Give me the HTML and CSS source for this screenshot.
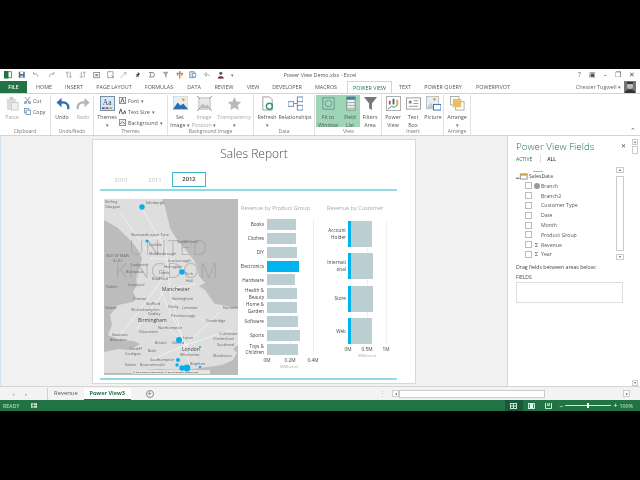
FILE: index.html
```html
<!DOCTYPE html>
<html lang="en">
<head>
<meta charset="utf-8">
<title>Power View Demo.xlsx - Excel</title>
<link rel="stylesheet" href="styles.css">
</head>
<body>
<div class="letterbox"></div>
<div class="window">
  <header class="titlebar">
    <div class="qat">
      <svg class="qi" viewBox="0 0 10 10"><rect x="3" y="1" width="7" height="8" fill="#fff" stroke="#217346"/><rect x="0" y="0" width="6" height="10" fill="#217346"/></svg>
      <svg class="qi" viewBox="0 0 10 10"><rect x="1" y="1" width="8" height="8" fill="#4a6a8c"/><rect x="3" y="1" width="4" height="3" fill="#fff"/><rect x="3" y="6" width="4" height="3" fill="#ccd"/></svg>
      <svg class="qi" viewBox="0 0 10 10"><path d="M8 8C8 4 5 3 2 4M2 1v3h3" fill="none" stroke="#aaa" stroke-width="1.2"/></svg>
      <svg class="qi gapped" viewBox="0 0 10 10"><path d="M2 8C2 4 5 3 8 4M8 1v3H5" fill="none" stroke="#aaa" stroke-width="1.2"/></svg>
      <svg class="qi gapped" viewBox="0 0 10 10"><path d="M3 1v8M7 1v8M1 3l2-2 2 2M5 7l2 2 2-2" fill="none" stroke="#999"/></svg>
      <svg class="qi" viewBox="0 0 10 10"><path d="M3 1v8M7 1v8M1 7l2 2 2-2M5 3l2-2 2 2" fill="none" stroke="#999"/></svg>
      <svg class="qi" viewBox="0 0 10 10"><rect x="1" y="2" width="8" height="7" fill="none" stroke="#777"/><rect x="3" y="4" width="4" height="3" fill="#999"/></svg>
      <svg class="qi" viewBox="0 0 10 10"><rect x="1" y="1" width="7" height="8" fill="none" stroke="#888"/><path d="M6 6l3 3" stroke="#888"/></svg>
      <svg class="qi" viewBox="0 0 10 10"><path d="M1 9l7-7M5 2h3v3" fill="none" stroke="#aaa"/></svg>
      <svg class="qi" viewBox="0 0 10 10"><path d="M5 1l3 3-2 2v3l-1-2-3 2 2-3-2-1 3-1z" fill="#444"/></svg>
      <svg class="qi" viewBox="0 0 10 10"><path d="M2 2h5l2 3-2 3H2l2-3z" fill="none" stroke="#666"/></svg>
      <svg class="qi" viewBox="0 0 10 10"><path d="M1 1h8L6 5v4L4 8V5z" fill="#9aa"/></svg>
      <svg class="qi" viewBox="0 0 10 10"><path d="M5 0v10M1 3h8M1 3l2 3M9 3L7 6" stroke="#c8702a" fill="none" stroke-width="1.5"/></svg>
      <svg class="qi" viewBox="0 0 10 10"><rect x="1" y="1" width="6" height="8" fill="#cfe0ee" stroke="#6a88a8"/><rect x="5" y="3" width="4" height="5" fill="#fff" stroke="#6a88a8"/></svg>
      <svg class="qi" viewBox="0 0 10 10"><path d="M1 3l3 4 2-3 3 3" fill="none" stroke="#8aa" stroke-width="1.2"/><circle cx="4" cy="3" r="1" fill="#c66"/></svg>
      <svg class="qi" viewBox="0 0 10 10"><circle cx="5" cy="3" r="2" fill="#555"/><path d="M1 10c0-4 8-4 8 0z" fill="#333"/><rect x="4" y="7" width="2" height="3" fill="#c33"/></svg>
      <span class="qat-more">▾</span>
    </div>
    <div class="doc-title">Power View Demo.xlsx - Excel</div>
    <div class="win-ctrl"><span>?</span><span>▣</span><span>–</span><span>❐</span><span>✕</span></div>
  </header>

  <nav class="tabs">
    <span class="tab file">FILE</span>
    <span class="tab w34">HOME</span>
    <span class="tab w26">INSERT</span>
    <span class="tab w54">PAGE LAYOUT</span>
    <span class="tab w36">FORMULAS</span>
    <span class="tab w34">DATA</span>
    <span class="tab w26">REVIEW</span>
    <span class="tab w32">VIEW</span>
    <span class="tab w36">DEVELOPER</span>
    <span class="tab w42">MACROS</span>
    <span class="tab active">POWER VIEW</span>
    <span class="tab w26">TEXT</span>
    <span class="tab w50">POWER QUERY</span>
    <span class="tab w50">POWERPIVOT</span>
    <span class="user">Chester Tugwell <i class="caret">▾</i></span>
    <svg class="avatar" viewBox="0 0 12 12"><rect width="12" height="12" fill="#777"/><circle cx="6" cy="5" r="3" fill="#bbb"/><path d="M1 12c0-5 10-5 10 0z" fill="#333"/><rect x="3" y="1" width="6" height="2" fill="#333"/></svg>
  </nav>

  <section class="ribbon">
    <div class="group g-clip">
      <div class="tools">
        <div class="btn dim b24">
          <svg class="big" viewBox="0 0 16 16"><rect x="2" y="3" width="10" height="12" fill="#ddd"/><rect x="5" y="1" width="4" height="3" fill="#c8c8c8"/><rect x="7" y="7" width="7" height="8" fill="#eee" stroke="#ccc"/></svg>
          <span>Paste</span>
        </div>
        <div class="stack">
          <div class="line"><svg class="sm" viewBox="0 0 8 8"><path d="M1 0l5 6M7 0L2 6" stroke="#888" fill="none"/><circle cx="1.500" cy="6.500" r="1.200" fill="none" stroke="#4a7fb0"/><circle cx="6.500" cy="6.500" r="1.200" fill="none" stroke="#4a7fb0"/></svg>Cut</div>
          <div class="line"><svg class="sm" viewBox="0 0 8 8"><rect x="0.500" y="0.500" width="5" height="5" fill="#fff" stroke="#7a9ab5"/><rect x="2.500" y="2.500" width="5" height="5" fill="#fff" stroke="#7a9ab5"/></svg>Copy</div>
        </div>
      </div>
      <div class="glabel">Clipboard</div>
    </div>
    <div class="group g-undo">
      <div class="tools">
        <div class="btn b22">
          <svg class="big" viewBox="0 0 16 16"><path d="M14 14c1-6-3-8-9-7" fill="none" stroke="#2f6db0" stroke-width="2.500"/><path d="M7 2L1.500 7 7 12z" fill="#2f6db0"/></svg>
          <span>Undo</span>
        </div>
        <div class="btn dim b20">
          <svg class="big" viewBox="0 0 16 16"><path d="M2 14c-1-6 3-8 9-7" fill="none" stroke="#b5b5b5" stroke-width="2.500"/><path d="M9 2l5.500 5L9 12z" fill="#b5b5b5"/></svg>
          <span>Redo</span>
        </div>
      </div>
      <div class="glabel">Undo/Redo</div>
    </div>
    <div class="group g-themes">
      <div class="tools">
        <div class="btn b24 first">
          <svg class="big" viewBox="0 0 16 16"><rect x="0.500" y="0.500" width="15" height="15" fill="#dce6f0" stroke="#6d8aa8"/><rect x="2" y="12" width="3" height="2" fill="#3a6ea5"/><rect x="6" y="12" width="3" height="2" fill="#c0504d"/><rect x="10" y="12" width="3" height="2" fill="#9bbb59"/><text x="3" y="10" class="aa">Aa</text></svg>
          <span>Themes</span><i class="caret">▾</i>
        </div>
        <div class="stack">
          <div class="line"><svg class="sm" viewBox="0 0 8 8"><rect x="0.500" y="0.500" width="7" height="7" fill="#fff" stroke="#888"/><path d="M2 6.500L4 1.500 6 6.500" fill="none" stroke="#444"/></svg>Font <i class="caret">▾</i></div>
          <div class="line"><svg class="sm" viewBox="0 0 8 8"><path d="M0 7L2 1l2 6M5 7l1.500-4L8 7" fill="none" stroke="#444"/></svg>Text Size <i class="caret">▾</i></div>
          <div class="line"><svg class="sm" viewBox="0 0 8 8"><rect x="0.500" y="0.500" width="7" height="7" fill="#e6eef5" stroke="#888"/><path d="M1 6l3-3 3 3" stroke="#4a7fb0" fill="none"/></svg>Background <i class="caret">▾</i></div>
        </div>
      </div>
      <div class="glabel">Themes</div>
    </div>
    <div class="group g-bg">
      <div class="tools">
        <div class="btn b24">
          <svg class="big" viewBox="0 0 16 16"><rect width="16" height="14" fill="#e7eef5" stroke="#9aa" stroke-width=".5"/><path d="M0 14l5-7 3 3 3-2 5 6z" fill="#2f6db0"/><circle cx="11" cy="4" r="1.500" fill="#e3a93c"/></svg>
          <span>Set<br>Image <i class="caret">▾</i></span>
        </div>
        <div class="btn dim b24">
          <svg class="big" viewBox="0 0 16 16"><rect x="2" y="2" width="12" height="12" fill="#e8e8e8" stroke="#bbb"/><path d="M2 13l4-5 3 3 2-2 3 4z" fill="#bbb"/><path d="M0 0l3 3M16 0l-3 3M0 16l3-3M16 16l-3-3" stroke="#999"/></svg>
          <span>Image<br>Position <i class="caret">▾</i></span>
        </div>
        <div class="btn dim b36">
          <svg class="big" viewBox="0 0 16 16"><path d="M8 1l2.200 4.800 5 .6-3.700 3.500 1 5.100L8 12.500 3.500 15l1-5.100L.8 6.400l5-.6z" fill="#b9b9b9"/></svg>
          <span>Transparency</span><i class="caret">▾</i>
        </div>
      </div>
      <div class="glabel">Background Image</div>
    </div>
    <div class="group g-data">
      <div class="tools">
        <div class="btn b26">
          <svg class="big" viewBox="0 0 16 16"><path d="M3 1h7l3 3v11H3z" fill="#fff" stroke="#999"/><circle cx="10" cy="11" r="3.200" fill="none" stroke="#2f9a6d" stroke-width="1.500"/></svg>
          <span>Refresh</span><i class="caret">▾</i>
        </div>
        <div class="btn b30">
          <svg class="big" viewBox="0 0 16 16"><rect x="0" y="6" width="6" height="5" fill="#fff" stroke="#5f8fb8"/><rect x="10" y="1" width="6" height="5" fill="#fff" stroke="#5f8fb8"/><rect x="10" y="10" width="6" height="5" fill="#fff" stroke="#5f8fb8"/><path d="M6 8h4M10 4v8" stroke="#888"/></svg>
          <span>Relationships</span>
        </div>
      </div>
      <div class="glabel">Data</div>
    </div>
    <div class="group g-view">
      <div class="tools">
        <div class="btn on b24">
          <svg class="big" viewBox="0 0 16 16"><rect x="2" y="2" width="12" height="12" fill="#a8d5c0" stroke="#5b9c84"/><circle cx="8" cy="8" r="3.500" fill="none" stroke="#5b9c84"/></svg>
          <span>Fit to<br>Window</span>
        </div>
        <div class="btn on b20">
          <svg class="big" viewBox="0 0 16 16"><rect x="4" y="1" width="9" height="14" fill="#eef4f0" stroke="#7b8f86"/><rect x="4" y="1" width="9" height="3" fill="#3a7fb5"/><path d="M4 7h9M4 10h9M4 13h9" stroke="#9aa"/></svg>
          <span>Field<br>List</span>
        </div>
        <div class="btn b20">
          <svg class="big" viewBox="0 0 16 16"><path d="M1 1h14L9.500 8v7l-3-2V8z" fill="#777"/></svg>
          <span>Filters<br>Area</span>
        </div>
      </div>
      <div class="glabel">View</div>
    </div>
    <div class="group g-insert">
      <div class="tools">
        <div class="btn b20">
          <svg class="big" viewBox="0 0 16 16"><rect x="0.500" y="0.500" width="15" height="15" fill="#fff" stroke="#aaa"/><rect x="3" y="5" width="2" height="4" fill="#c0504d"/><rect x="7" y="3" width="2" height="6" fill="#2f6db0"/><rect x="11" y="4" width="2" height="5" fill="#e3a93c"/><path d="M2 14l4-3 3 1 4-3" stroke="#3a9a6d" fill="none"/></svg>
          <span>Power<br>View</span>
        </div>
        <div class="btn b20">
          <svg class="big" viewBox="0 0 16 16"><rect x="0.500" y="2" width="15" height="12" fill="#fff" stroke="#999"/><path d="M3 5h3v3H3z" fill="#6d8aa8"/><path d="M8 5h5M8 8h5M3 11h10" stroke="#999"/></svg>
          <span>Text<br>Box</span>
        </div>
        <div class="btn b20">
          <svg class="big" viewBox="0 0 16 16"><rect x="0.500" y="0.500" width="13" height="13" fill="#e7eef5" stroke="#bbb"/><circle cx="9" cy="3.500" r="1.500" fill="#e3a93c"/><path d="M1 13l4-6 4 6z" fill="#bcd"/><rect x="8" y="9" width="8" height="6" fill="#fff" stroke="#2f6db0"/></svg>
          <span>Picture</span>
        </div>
      </div>
      <div class="glabel">Insert</div>
    </div>
    <div class="group g-arr">
      <div class="tools">
        <div class="btn b26">
          <svg class="big" viewBox="0 0 16 16"><rect x="0.500" y="0.500" width="9" height="9" fill="#fff" stroke="#aaa"/><rect x="6" y="6" width="9" height="9" fill="#fff" stroke="#aaa"/><rect x="3" y="3" width="9" height="9" fill="#e8bd6c"/></svg>
          <span>Arrange</span><i class="caret">▾</i>
        </div>
      </div>
      <div class="glabel">Arrange</div>
    </div>
    <div class="collapse">⌃</div>
  </section>

  <main class="body">
    <div class="canvas">
      <article class="report">
        <h1 class="rtitle">Sales Report</h1>
        <div class="slicer">
          <span class="yr">2010</span><span class="yr">2011</span><span class="yr sel">2012</span>
        </div>
        <div class="rule"></div>
        <div class="viz">
          <div class="map">
            <svg viewBox="104 199 134 176" class="mapsvg">
              <rect x="104" y="199" width="134" height="176" fill="#bcbcbc"/>
              <path d="M104 199H162L165 207 167 215 170 228 176 238 186 250 193 259 197 266 199 276 205 283 199 286 205 290 212 300 215 304 222 305 238 309V345L233 349 237 353 233 360 222 365 200 368 185 370 160 369 145 370 135 373H104V352L118 349 130 350 140 344 134 341 120 340 108 335 112 325 110 315 118 305 133 302 136 298 133 292 137 285 136 276 140 268 142 258 138 250 133 243 128 238 118 228 104 220Z" fill="#dedede"/>
              <g fill="none" stroke="#f5f5f5" stroke-width=".7">
                <path d="M140 205L166 250 170 290 180 330 190 366M120 212L150 255M175 262L140 310 120 335M196 284L165 290 136 330M186 345L160 320M186 345L232 330M186 345L220 312M186 345L200 366M186 345L150 360M150 258L178 260M146 240L166 236M172 300L205 322M160 290L186 345"/>
              </g>
              <g class="wm"><text x="129" y="255">UNITED</text><text x="115" y="278">KINGDOM</text></g>
              <g class="lbl">
                <text x="105" y="203">Stirling</text><text x="105" y="208">Glasgow</text><text x="146" y="204">Edinburgh</text>
                <text x="131" y="236">Newcastle upon Tyne</text><text x="177" y="243">Sunderland</text><text x="149" y="246">Carlisle</text>
                <text x="149" y="255">Middlesbrough</text><text x="106" y="257">ISLE OF MAN</text><text x="113" y="262">(U.K.)</text><text x="168" y="262">Scarborough</text>
                <text x="131" y="266">Lancaster</text><text x="164" y="268">Harrogate</text><text x="126" y="273">Blackpool</text><text x="159" y="274">Leeds</text><text x="185" y="275">York</text>
                <text x="152" y="280">Bradford</text><text x="186" y="282">Hull</text>
                <text x="106" y="288">Dublin</text><text x="128" y="286">Liverpool</text><text class="b" x="162" y="291">Manchester</text>
                <text x="133" y="300">Chester</text><text x="172" y="300">Nottingham</text><text x="146" y="305">Stafford</text><text x="168" y="308">Derby</text><text x="182" y="309">Leicester</text>
                <text x="105" y="309">Gwent</text><text x="223" y="309">Norwich</text><text x="131" y="311">Wolverhampton</text><text x="148" y="315">Dudley</text><text x="171" y="317">Peterborough</text><text class="b" x="138" y="322">Birmingham</text><text x="206" y="322">Cambridge</text>
                <text x="158" y="329">Northampton</text><text x="139" y="333">Gloucester</text><text x="219" y="335">Colchester</text><text x="112" y="336">Swansea</text><text x="183" y="339">Luton</text><text x="110" y="341">Aberdare</text><text x="213" y="340">Chelmsford</text>
                <text x="155" y="344">Bristol</text><text x="172" y="344">Oxford</text><text x="217" y="346">Southend</text><text x="130" y="350">Cardiff</text><text class="b" x="182" y="351">London</text><text x="148" y="352">Bath</text>
                <text x="125" y="355">Cardigan</text><text x="180" y="356">Winchester</text><text x="213" y="357">Maidstone</text>
                <text x="150" y="361">Southampton</text><text x="125" y="366">Exeter</text><text x="140" y="366">Bournemouth</text><text x="190" y="365">Brighton</text>
              </g>
              <rect x="132" y="370" width="78" height="4" fill="#e4e4e4"/>
              <text x="133" y="373" class="lbl2">© 2012 Nokia, Digital Globe, © 2012 Microsoft Corporation</text>
              <g fill="#00aeef">
                <circle cx="142" cy="207" r="2.700"/><circle cx="147" cy="241" r="1.500"/><circle cx="182" cy="272" r="2.700"/><circle cx="179" cy="340" r="3"/><circle cx="200" cy="347" r="1"/><circle cx="178" cy="360" r="2"/><circle cx="177" cy="365" r="1.700"/><circle cx="182" cy="368" r="2.700"/><circle cx="187" cy="368" r="3.400"/><circle cx="200" cy="367" r="1.200"/>
              </g>
            </svg>
          </div>

          <div class="chart c1">
            <div class="ctitle">Revenue by Product Group</div>
            <div class="bars">
              <div class="row"><span class="cat">Books</span><b class="bar" style="width:29px"></b></div>
              <div class="row"><span class="cat">Clothes</span><b class="bar" style="width:29px"></b></div>
              <div class="row"><span class="cat">DIY</span><b class="bar" style="width:30px"></b></div>
              <div class="row"><span class="cat">Electronics</span><b class="bar hot" style="width:32px"></b></div>
              <div class="row"><span class="cat">Hardware</span><b class="bar" style="width:28px"></b></div>
              <div class="row"><span class="cat">Health &amp;<br>Beauty</span><b class="bar" style="width:30px"></b></div>
              <div class="row"><span class="cat">Home &amp;<br>Garden</span><b class="bar" style="width:30px"></b></div>
              <div class="row"><span class="cat">Software</span><b class="bar" style="width:31px"></b></div>
              <div class="row"><span class="cat">Sports</span><b class="bar" style="width:33px"></b></div>
              <div class="row"><span class="cat">Toys &amp;<br>Children</span><b class="bar" style="width:31px"></b></div>
            </div>
            <div class="axis a1"><span>0M</span><span>0.2M</span><span>0.4M</span></div>
            <div class="unit u1">(Millions)</div>
          </div>

          <div class="chart c2">
            <div class="ctitle clip">Revenue by Customer</div>
            <div class="bars2">
              <div class="row2"><span class="cat2">Account<br>Holder</span><b class="part"></b><b class="bar2" style="width:21px"></b></div>
              <div class="row2"><span class="cat2">Internati<br>onal</span><b class="part"></b><b class="bar2" style="width:22px"></b></div>
              <div class="row2"><span class="cat2">Store</span><b class="part"></b><b class="bar2" style="width:22px"></b></div>
              <div class="row2"><span class="cat2">Web</span><b class="part"></b><b class="bar2" style="width:21px"></b></div>
            </div>
            <div class="axis a2"><span>0M</span><span>0.5M</span><span>1M</span></div>
            <div class="unit u2">(Millions)</div>
          </div>
        </div>
        <div class="rule bottom"></div>
      </article>
    </div>

    <aside class="fields">
      <div class="fhead"><span class="ftitle">Power View Fields</span><span class="fclose">✕</span></div>
      <div class="ftabs"><span>ACTIVE</span><span class="fall">ALL</span></div>
      <div class="flist">
        <div class="ftree">
          <div class="clipped"></div>
          <div class="table-row"><svg class="tbl" viewBox="0 0 14 8"><path d="M0 6h4" stroke="#333"/><rect x="5" y="1" width="8" height="6" fill="#fff" stroke="#888"/><rect x="5" y="1" width="8" height="2" fill="#c9a646"/></svg>SalesData</div>
          <div class="field"><i class="cb"></i><i class="glyph globe"></i>Branch</div>
          <div class="field"><i class="cb"></i><i class="glyph"></i>Branch2</div>
          <div class="field"><i class="cb"></i><i class="glyph"></i>Customer Type</div>
          <div class="field"><i class="cb"></i><i class="glyph"></i>Date</div>
          <div class="field"><i class="cb"></i><i class="glyph"></i>Month</div>
          <div class="field"><i class="cb"></i><i class="glyph"></i>Product Group</div>
          <div class="field"><i class="cb"></i><i class="glyph sig">Σ</i>Revenue</div>
          <div class="field"><i class="cb"></i><i class="glyph sig">Σ</i>Year</div>
        </div>
        <div class="fscroll"><span class="sbtn">▴</span><span class="strack"></span><span class="sbtn">▾</span></div>
      </div>
      <div class="drag">Drag fields between areas below:</div>
      <div class="flabel">FIELDS</div>
      <div class="dropbox"></div>
    </aside>

    <div class="vscroll"><span class="sbtn">▴</span><span class="vthumb"></span><span class="vspace"></span><span class="sbtn">▾</span></div>
  </main>

  <div class="sheetbar">
    <span class="nav">◂</span><span class="nav">▸</span>
    <span class="sheet">Revenue</span>
    <span class="sheet cur">Power View3</span>
    <span class="plus">+</span>
    <span class="dots">⋮</span>
    <div class="hscroll"><span class="hbtn">◂</span><span class="hthumb"></span><span class="hspace"></span><span class="hbtn">▸</span></div>
  </div>

  <footer class="status">
    <span class="ready">READY</span>
    <svg class="macro" viewBox="0 0 8 6"><rect width="8" height="6" fill="#cfe3d8"/><path d="M1 3h6M3 0v6" stroke="#217346"/></svg>
    <div class="views">
      <span class="vw act"><svg viewBox="0 0 8 7"><path d="M0 .5h8M0 3.500h8M0 6.500h8M.5 0v7M4 0v7M7.500 0v7" stroke="#dfe" fill="none"/></svg></span>
      <span class="vw"><svg viewBox="0 0 8 7"><rect x=".5" y=".5" width="7" height="6" fill="none" stroke="#dfe"/><rect x="2" y="1" width="4" height="5" fill="#dfe"/></svg></span>
      <span class="vw"><svg viewBox="0 0 8 7"><path d="M.5 0v6.500h7V0M3 0v3h2V0" fill="none" stroke="#eff"/></svg></span>
    </div>
    <div class="zoomer"><span>–</span><div class="track"><b class="knob"></b></div><span>+</span></div>
    <span class="pct">100%</span>
  </footer>
</div>
<div class="letterbox"></div>
</body>
</html>
```
FILE: styles.css
```css
* { box-sizing: border-box; }
html, body { margin: 0; height: 480px; overflow: hidden; background: #000; }
body { font-family: "Open Sans", "Liberation Sans", sans-serif; color: #444; font-size: 6px; }
.letterbox { height: 69px; background: #000; }
.window { height: 342px; background: #fff; display: flex; flex-direction: column; filter: blur(.35px); }
i { font-style: normal; }

.titlebar { height: 12px; display: flex; align-items: center; position: relative; padding-left: 4px; }
.qat { display: flex; gap: 6.300px; align-items: center; }
.qi { width: 7.500px; height: 7.500px; flex: none; }
.gapped { margin-left: 3px; }
.qat-more { font-size: 5px; color: #777; }
.doc-title { position: absolute; left: 0; right: 0; text-align: center; font-size: 5.300px; color: #555; }
.win-ctrl { margin-left: auto; display: flex; gap: 8px; padding-right: 5px; font-size: 6.500px; color: #555; }

.tabs { height: 12px; display: flex; align-items: center; font-size: 5.400px; color: #555; position: relative; }
.tab { text-align: center; white-space: nowrap; flex: none; }
.file { width: 27px; height: 12px; line-height: 12px; background: #217346; color: #fff; font-weight: 600; }
.w26 { width: 26px; } .w32 { width: 32px; } .w34 { width: 34px; } .w36 { width: 36px; } .w42 { width: 42px; } .w50 { width: 50px; } .w54 { width: 54px; }
.active { width: 45px; height: 13px; line-height: 12px; background: #fff; color: #217346; border: 1px solid #d4d4d4; border-bottom: 0; position: relative; top: 1px; }
.user { margin-left: auto; font-size: 5.500px; color: #666; margin-right: 3px; }
.caret { font-size: 4.500px; color: #666; }
.avatar { width: 12px; height: 12px; margin-right: 4px; flex: none; }

.ribbon { height: 43px; display: flex; border-top: 1px solid #d4d4d4; border-bottom: 1px solid #d4d4d4; background: #fff; position: relative; font-size: 5.300px; color: #555; }
.group { display: flex; flex-direction: column; border-right: 1px solid #e2e2e2; margin: 1px 0 0; flex: none; }
.g-clip { width: 51px; } .g-undo { width: 43px; } .g-themes { width: 74px; } .g-bg { width: 86px; } .g-data { width: 61px; } .g-view { width: 67px; padding-left: 1px; } .g-insert { width: 62px; padding-left: 1px; } .g-arr { width: 27px; }
.tools { flex: 1; display: flex; }
.first { margin-left: 1px; }
.btn { display: flex; flex-direction: column; align-items: center; text-align: center; line-height: 7.600px; flex: none; height: 33px; padding-top: 1px; white-space: nowrap; }
.btn .big { width: 15px; height: 15px; margin-bottom: 3px; flex: none; }
.b20 { width: 20px; } .b22 { width: 22px; } .b24 { width: 24px; } .b26 { width: 26px; } .b30 { width: 30px; } .b36 { width: 36px; }
.dim { color: #aaa; }
.on { background: #9fd5b7; }
.btn.on { height: 32px; }
.stack { display: flex; flex-direction: column; gap: 3px; padding-top: 2px; }
.line { display: flex; align-items: center; gap: 2px; height: 8px; white-space: nowrap; }
.sm { width: 7px; height: 7px; flex: none; }
.glabel { height: 7px; line-height: 7px; text-align: center; font-size: 5px; color: #777; }
.aa { font-size: 8px; fill: #2f4f7f; font-family: "Liberation Serif", serif; }
.collapse { position: absolute; right: 4px; bottom: 0; font-size: 7px; color: #666; }

.body { height: 252px; display: flex; background: #f1f1f1; border-bottom: 1px solid #d4d4d4; }
.canvas { flex: none; width: 507px; padding: 3px 0 0 92px; overflow: hidden; border-left: 1px solid #cfe4f2; }
.report { width: 324px; height: 245px; margin-left: -1px; background: #fff; border: 1px solid #d8d8d8; display: flex; flex-direction: column; }
.rtitle { margin: 7px 0 0; font-weight: 300; font-size: 12px; line-height: 14px; text-align: center; color: #4a4a4a; }
.slicer { display: flex; align-items: center; margin: 11px 0 0 11px; height: 16px; font-size: 5.800px; color: #bdbdbd; }
.yr { width: 34px; text-align: center; flex: none; }
.sel { height: 15px; line-height: 12px; border: 1.500px solid #3fb7cf; color: #333; font-weight: 600; }
.rule { height: 2px; flex: none; margin: 1px 18px 0 7px; background: #8edbe6; }
.viz { display: flex; height: 178px; flex: none; margin: 8px 0 0 11px; }
.map { width: 134px; height: 176px; position: relative; flex: none; }
.mapsvg { display: block; width: 134px; height: 176px; }
.wm text { font-size: 21px; fill: #999; fill-opacity: .55; letter-spacing: 1px; font-weight: 300; }
.lbl text { font-size: 3.800px; fill: #666; }
.lbl .b { font-size: 5px; fill: #444; }
.lbl2 { font-size: 2.400px; fill: #333; }
.chart { display: flex; flex-direction: column; flex: none; }
.c1 { width: 87px; }
.c2 { width: 62px; }
.ctitle { font-size: 5.500px; color: #a8a8a8; height: 9px; line-height: 9px; white-space: nowrap; margin: 5px 0 0 3px; }
.clip { width: 58px; overflow: hidden; margin-left: 2px; }
.bars { margin-top: 6px; display: flex; flex-direction: column; gap: 3px; background: linear-gradient(#eee,#eee) no-repeat 52px 0 / 1px 100%, linear-gradient(#eee,#eee) no-repeat 75px 0 / 1px 100%; }
.row { display: flex; align-items: center; height: 10.900px; }
.cat { width: 26px; margin-right: 3px; text-align: right; font-size: 4.700px; line-height: 6.500px; color: #444; flex: none; white-space: nowrap; }
.bar { height: 11px; background: #bbcfd3; flex: none; }
.hot { background: #00b4ef; }
.axis { display: flex; font-size: 4.800px; color: #444; text-align: center; }
.a1 { margin: 2px 0 0 17.500px; }
.a1 span { width: 23px; flex: none; }
.a2 { margin: 2px 0 0 13.500px; }
.a2 span { width: 19px; flex: none; }
.unit { font-size: 4.300px; color: #aaa; }
.u1 { margin: 0 0 0 42px; }
.u2 { margin: 0 0 0 33px; }
.bars2 { margin-top: 8px; display: flex; flex-direction: column; gap: 6.500px; background: linear-gradient(#f0f0f0,#f0f0f0) no-repeat 42px 0 / 1px 100%, linear-gradient(#f0f0f0,#f0f0f0) no-repeat 61px 0 / 1px 100%; }
.row2 { display: flex; align-items: center; height: 26px; }
.cat2 { width: 21px; margin-right: 2px; text-align: right; font-size: 4.700px; line-height: 7px; flex: none; color: #444; white-space: nowrap; }
.part { width: 3px; height: 26px; background: #00b4ef; flex: none; }
.bar2 { height: 26px; background: #bbcfd3; flex: none; }

.fields { width: 123px; flex: none; background: #fff; border-left: 1px solid #d4d4d4; display: flex; flex-direction: column; padding-left: 8px; }
.fhead { display: flex; justify-content: space-between; align-items: center; height: 13px; margin-top: 4px; padding-right: 4px; }
.ftitle { font-size: 9.800px; font-weight: 300; color: #217346; white-space: nowrap; }
.fclose { font-size: 6px; color: #555; }
.ftabs { display: flex; gap: 8px; font-size: 5px; height: 8px; margin-top: 2px; line-height: 8px; color: #217346; }
.fall { color: #333; font-weight: 600; border-left: 1px solid #ddd; padding-left: 6px; }
.flist { display: flex; height: 97px; padding-top: 4px; }
.ftree { width: 99px; flex: none; padding-top: 4px; }
.clipped { width: 10px; height: 1px; margin-left: 17px; background: #c9b27a; }
.table-row { display: flex; align-items: center; height: 9px; font-size: 5.200px; gap: 1px; color: #444; }
.tbl { width: 12px; height: 7px; }
.field { display: flex; align-items: center; height: 9.800px; margin-left: 9px; font-size: 5.200px; color: #555; white-space: nowrap; }
.cb { width: 7px; height: 7px; border: 1px solid #bbb; flex: none; background: #fff; }
.glyph { width: 9px; flex: none; font-size: 6px; text-align: center; }
.globe::before { content: ""; display: block; width: 6px; height: 6px; border-radius: 50%; background: #999; margin: 0 auto; }
.fscroll { width: 8px; display: flex; flex-direction: column; margin-left: 1px; gap: 3px; }
.sbtn { height: 6px; border: 1px solid #ccc; font-size: 4px; line-height: 4px; text-align: center; color: #666; flex: none; background: #fff; }
.strack { flex: 1; border: 1px solid #ccc; }
.drag { font-size: 5.200px; color: #444; margin-top: 3px; }
.flabel { font-size: 5px; color: #444; margin-top: 3px; }
.dropbox { width: 107px; height: 21px; border: 1px solid #ddd; margin-top: 2px; }
.vscroll { width: 10px; flex: none; display: flex; flex-direction: column; background: #fff; padding: 3px 2px 0 2px; gap: 1px; }
.vthumb { height: 8px; border: 1px solid #ccc; flex: none; }
.vspace { flex: 1; }

.sheetbar { height: 13px; background: #f3f3f3; display: flex; align-items: center; font-size: 5.900px; color: #555; position: relative; }
.nav { width: 13px; text-align: center; color: #bbb; font-size: 5px; flex: none; }
.nav:first-child { margin-left: 7px; }
.sheet { height: 12px; line-height: 11px; padding: 0 6px; flex: none; border-left: 1px solid #d0d0d0; }
.sheet:nth-child(3) { margin-left: 14px; }
.cur { background: #fff; color: #217346; font-weight: 700; border-bottom: 1px solid #217346; border-left: 0; padding: 0; width: 47px; text-align: center; white-space: nowrap; font-size: 5.600px; }
.plus { width: 8px; height: 8px; border: 1px solid #888; border-radius: 50%; line-height: 5px; text-align: center; margin-left: 15px; font-size: 7px; flex: none; }
.dots { margin-left: auto; color: #bbb; font-size: 7px; flex: none; margin-right: 6px; }
.hscroll { flex: none; display: flex; align-items: center; width: 238px; height: 9px; margin-right: 10px; }
.hbtn { width: 7px; height: 7px; border: 1px solid #ccc; background: #fff; font-size: 4px; line-height: 5px; text-align: center; flex: none; }
.hthumb { width: 146px; height: 8px; background: #fff; border: 1px solid #ccc; flex: none; }
.hspace { width: 78px; flex: none; }

.status { height: 11px; background: #217346; color: #d8ece0; display: flex; align-items: center; font-size: 5px; padding-left: 3px; }
.ready { width: 28px; flex: none; letter-spacing: .2px; }
.macro { width: 6px; height: 5px; flex: none; }
.views { display: flex; margin-left: 468px; }
.vw { width: 17.500px; height: 11px; display: flex; align-items: center; justify-content: center; flex: none; }
.vw.act { background: #19593a; }
.vw svg { width: 7px; height: 6px; }
.zoomer { display: flex; align-items: center; gap: 2px; margin-left: 2px; width: 58px; font-size: 7px; color: #fff; }
.track { width: 47px; height: 1px; background: #cfe3d8; position: relative; }
.knob { position: absolute; left: 22px; top: -2px; width: 2px; height: 5px; background: #fff; }
.pct { margin-left: 2px; font-size: 5.300px; color: #cfe3d8; }
```
